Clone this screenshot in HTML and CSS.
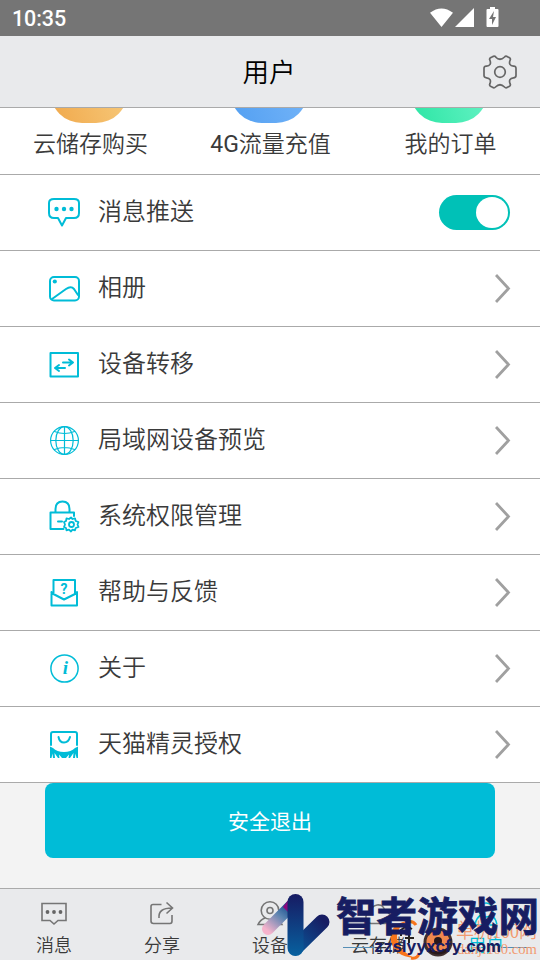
FILE: index.html
```html
<!DOCTYPE html>
<html lang="zh-CN">
<head>
<meta charset="utf-8">
<title>用户</title>
<link rel="stylesheet" href="styles.css">
</head>
<body>
<div class="screen">
  <div class="status">
    <span class="clock">10:35</span>
    <svg class="status-icons" width="70" height="24" viewBox="0 0 70 24" fill="#fff"><path d="M1 6.800Q12.500-1.800 24 6.800L12.500 21ZM26 21H45V2ZM58.500 3H61V1h5v2h2.500q1 0 1 1v16q0 1-1 1h-10q-1 0-1-1V4q0-1 1-1Z"/><path fill="#757575" d="M65 5l-5 8h3v6l4-8h-3Z"/></svg>
  </div>
  <header class="header">
    <h1>用户</h1>
    <svg class="gear" width="36" height="36" viewBox="-18 -18 36 36"><path d="M-4.500-15.500Q-6-16.300-7.500-15.300L-9.500-14.200Q-11-13.200-10-11.500Q-8.200-6.500-13.500-5.800Q-16-6-16-3.500V3.500Q-16 5.800-13.500 5.800Q-8.200 6.500-10 11.500Q-11 13.200-9.500 14.200L-7.500 15.300Q-5.800 16.500-4.500 15Q0 10.500 4.500 15Q5.800 16.500 7.500 15.300L9.500 14.200Q11 13.200 10 11.500Q8.200 6.500 13.500 5.800Q16 5.800 16 3.500V-3.500Q16-6 13.500-5.800Q8.200-6.500 10-11.500Q11-13.200 9.500-14.200L7.500-15.300Q5.800-16.500 4.500-15Q0-10.500-4.500-15Z"/><circle r="5.300"/></svg>
  </header>
  <section class="services">
    <div class="service"><i class="orb orange"></i><span>云储存购买</span></div>
    <div class="service"><i class="orb blue"></i><span><b>4G</b>流量充值</span></div>
    <div class="service"><i class="orb green"></i><span>我的订单</span></div>
  </section>
  <main class="list">
    <div class="row">
      <svg class="icon" viewBox="0 0 34 34"><path d="M7 4H27Q32 4 32 8V18Q32 23 27 23H19L15 30.500L11 23H7Q2 23 2 18V8Q2 4 7 4Z"/><g class="solid"><circle cx="9.500" cy="14" r="2.200"/><circle cx="17" cy="14" r="2.200"/><circle cx="24.500" cy="14" r="2.200"/></g></svg>
      <span>消息推送</span><b class="switch"></b>
    </div>
    <div class="row">
      <svg class="icon" viewBox="0 0 34 34"><rect x="3" y="6" width="29" height="23.500" rx="4"/><path d="M5 28L19 18Q24 14.500 27 18L31 24"/><circle class="solid" cx="7.800" cy="10.500" r="2.100"/></svg>
      <span>相册</span><svg class="arrow" viewBox="0 0 16 30"><path d="M1 1L13.500 14.500L1 28"/></svg>
    </div>
    <div class="row">
      <svg class="icon" viewBox="0 0 34 34"><rect x="3.500" y="6" width="27.500" height="23.500"/><path d="M16 15.500H26M22 12.500L26 15.500L22 18.500M18 21H8M12 18L8 21L12 24"/></svg>
      <span>设备转移</span><svg class="arrow" viewBox="0 0 16 30"><path d="M1 1L13.500 14.500L1 28"/></svg>
    </div>
    <div class="row">
      <svg class="icon thin" viewBox="0 0 34 34"><circle cx="17.500" cy="17.500" r="13.900"/><ellipse cx="17.500" cy="17.500" rx="8.700" ry="13.900"/><path d="M17.500 4V31M4 17.500H31M7.500 8.500Q17.500 12.500 27.500 8.500M7.500 26.500Q17.500 22.500 27.500 26.500"/></svg>
      <span>局域网设备预览</span><svg class="arrow" viewBox="0 0 16 30"><path d="M1 1L13.500 14.500L1 28"/></svg>
    </div>
    <div class="row">
      <svg class="icon" viewBox="0 0 34 34"><path d="M16.500 30H3.500V13.500H27V17M8.500 13V10Q8.500 2.500 15.500 2.500T22.500 10V13M11 22.500H15"/><path class="mini" d="M24 18.500L25.500 20L28 19.300L28.700 22L31.500 23L30.500 25.500L31.500 28L28.700 29L28 31.300L25.500 30.700L24 32.500L22 30.700L19.500 31.300L19 29L17 28L18 25.500L17 23L19 22L19.500 19.300L22 20Z"/><circle class="mini" cx="24.500" cy="25.500" r="2.500"/></svg>
      <span>系统权限管理</span><svg class="arrow" viewBox="0 0 16 30"><path d="M1 1L13.500 14.500L1 28"/></svg>
    </div>
    <div class="row">
      <svg class="icon" viewBox="0 0 34 34"><path d="M6.500 18V5H28V18M4.500 17V30.500H30V17M4.500 18L17 24.500L30 18"/><text x="17" y="19">?</text></svg>
      <span>帮助与反馈</span><svg class="arrow" viewBox="0 0 16 30"><path d="M1 1L13.500 14.500L1 28"/></svg>
    </div>
    <div class="row">
      <svg class="icon info" viewBox="0 0 34 34"><circle cx="17.500" cy="17.500" r="13.600"/><text x="18.500" y="23">i</text></svg>
      <span>关于</span><svg class="arrow" viewBox="0 0 16 30"><path d="M1 1L13.500 14.500L1 28"/></svg>
    </div>
    <div class="row">
      <svg class="icon" viewBox="0 0 34 34"><path d="M4 18V7Q4 5 6 5H28Q30 5 30 7V18M11.500 10Q12.500 15.500 17 15.500T23 10"/><path class="solid" d="M3 19.500L6 21Q10 25 17 25T28 21L31 19.500V31H29.500L28.500 26.500L28 31H26L26.500 26L23 31H21.500L22 27.500L19 31H15L12 27.500L12.500 31H11L7.500 26L8 31H6L5.500 26.500L4.500 31H3Z"/></svg>
      <span>天猫精灵授权</span><svg class="arrow" viewBox="0 0 16 30"><path d="M1 1L13.500 14.500L1 28"/></svg>
    </div>
  </main>
  <div class="exit"><button>安全退出</button></div>
  <nav class="tabs">
    <div class="tab"><svg viewBox="0 0 28 28"><path d="M2 4.500H26V21.500H18L14 25L10 21.500H2Z"/><g class="dot"><circle cx="7.500" cy="13" r="1.900"/><circle cx="14" cy="13" r="1.900"/><circle cx="20.500" cy="13" r="1.900"/></g></svg><span>消息</span></div>
    <div class="tab"><svg viewBox="0 0 28 28"><path d="M13.500 5.500H5Q3 5.500 3 7.500V22Q3 24.500 5.500 24.500H22Q24 24.500 24 22V16M11 19Q10 9 24 9M18.500 3.500L24.500 9L18.500 14.500"/></svg><span>分享</span></div>
    <div class="tab"><svg viewBox="0 0 28 28"><circle cx="14" cy="11.500" r="8.800"/><circle cx="14" cy="11.500" r="3"/><path d="M9 19Q4 21 2 25.500H26Q24 21 19 19"/></svg><span>设备</span></div>
    <div class="tab"><svg viewBox="0 0 28 28"><path d="M7 24.500H21Q27 23 26 16Q24 12 21 13Q20 5 13 6Q7 7 7 13Q1 14 2 20Q3 24 7 24.500"/></svg><span>云存储</span></div>
    <div class="tab active"><svg viewBox="0 0 28 28"><circle cx="14" cy="11" r="7"/><path d="M9 16Q4 19 3 26H25Q24 19 19 16"/></svg><span>用户</span></div>
  </nav>
  <svg class="mark" width="300" height="80" viewBox="240 880 300 80">
    <defs>
      <linearGradient id="navy" x1="0" y1="0" x2="0" y2="1"><stop offset="0" stop-color="#171b63"/><stop offset="1" stop-color="#07619f"/></linearGradient>
      <linearGradient id="rise" gradientUnits="userSpaceOnUse" x1="323" y1="920" x2="294" y2="950"><stop offset="0" stop-color="#171c62"/><stop offset="1" stop-color="#09589a"/></linearGradient>
      <linearGradient id="fade" gradientUnits="userSpaceOnUse" x1="268" y1="931" x2="291" y2="903"><stop offset="0" stop-color="#f5b3cc"/><stop offset=".55" stop-color="#5983b0"/><stop offset="1" stop-color="#063b83"/></linearGradient>
    </defs>
    <g class="stroke">
      <path stroke="url(#fade)" stroke-width="12" d="M268 929L291 906"/>
      <path fill="#8b087e" d="M283 907L289 899V913Z"/>
      <path stroke="url(#rise)" stroke-width="15" d="M295.500 948L322 922"/>
      <rect x="287.500" y="894" width="16" height="62" rx="8" fill="url(#navy)"/>
    </g>
    <path d="M343 947.500H375M501 947.500H531" stroke="#568eb5" stroke-width="1"/>
    <path d="M407 921Q389 924 391 941Q394 956 414 958Q402 952 398 942Q394 930 407 921Z" fill="#f8751b"/>
    <path d="M406 922Q413 920 416 925M411 958Q418 959 419 953" fill="none" stroke="#f8751b" stroke-width="3"/>
    <path d="M401 936V930Q406 925 412 929M405 938H414M409 933V943" fill="none" stroke="#28231f" stroke-width="2"/>
    <circle cx="438" cy="942" r="13" fill="#f0884d" stroke="#40302e" stroke-width="3"/>
    <circle cx="438" cy="941" r="4" fill="#28191c"/><path d="M428 949Q438 957 448 949" stroke="#28191c" stroke-width="3" fill="none"/>
    <g class="orange-copy"><text x="456" y="938" font-size="20" textLength="81" lengthAdjust="spacingAndGlyphs">单机100网</text><text x="457" y="954" font-size="15" textLength="80" lengthAdjust="spacingAndGlyphs">danji100.com</text></g>
    <text class="brand" x="336" y="931" textLength="203" lengthAdjust="spacingAndGlyphs">智者游戏网</text>
    <text class="domain" x="374" y="952" textLength="127" lengthAdjust="spacingAndGlyphs">zzslyyxcfy.com</text>
  </svg>
</div>
</body>
</html>
```
FILE: styles.css
```css
* { box-sizing: border-box; }
body { margin: 0; font-family: Roboto, "Noto Sans CJK SC", sans-serif; font-weight: 350; color: #3a3a3a; }
.screen { position: relative; width: 540px; height: 960px; overflow: hidden; display: flex; flex-direction: column; background: #f3f3f3; }
.status { height: 36px; flex: none; display: flex; align-items: center; justify-content: space-between; padding: 2px 42px 0 12px; background: #757575; color: #fff; }
.clock { font-size: 21.500px; font-weight: 500; letter-spacing: -.1px; margin-top: -2px; }
.status-icons { display: block; margin-top: -2px; margin-right: -1px; }
.header { height: 72px; flex: none; display: grid; grid-template-columns: 1fr 100px 1fr; align-items: center; background: #e9eaec; border-bottom: 1px solid #aaa; }
.header h1 { grid-column: 2; margin: 0 2px 0 0; text-align: center; font-size: 26.500px; line-height: 36px; padding-top: 3px; font-weight: 350; color: #000; }
.gear { justify-self: end; margin-right: 22px; fill: none; stroke: #666; stroke-width: 1.7; }
.services { height: 67px; flex: none; display: grid; grid-template-columns: repeat(3, 1fr); background: #fff; border-bottom: 1px solid #aaa; overflow: hidden; }
.service { display: flex; flex-direction: column; align-items: center; font-size: 23px; line-height: 32px; }
.service b { font-weight: 400; }
.service span { margin-left: 1px; }
.orb { flex: none; width: 78px; height: 76px; margin-top: -61px; margin-bottom: 6px; border-radius: 32px; }
.service .orb { margin-left: -2px; }
.orange { background: linear-gradient(70deg, #f0a84b, #f8cf83); }
.blue { background: linear-gradient(70deg, #529ff1, #7ab8fa); }
.green { background: linear-gradient(70deg, #2be5a4, #70f5ca); }
.list { flex: none; background: #fff; }
.row { height: 76px; display: flex; align-items: center; padding: 0 30px 0 47px; border-bottom: 1px solid #aaa; }
.row > span { flex: 1; margin-left: 17px; font-size: 24px; line-height: 34px; padding-bottom: 2px; }
.icon { width: 34px; height: 34px; flex: none; margin-top: -2px; fill: none; stroke: #00bcd7; stroke-width: 2; stroke-linejoin: round; stroke-linecap: round; }
.icon .solid { fill: #00bcd7; stroke: none; }
.icon.thin { stroke-width: 1.2; }
.icon .mini { stroke-width: 1.8; }
.icon text { fill: #00bcd7; stroke: none; font: bold 14px Roboto, sans-serif; text-anchor: middle; }
.icon.info { stroke-width: 1.5; }
.icon.info text { font: italic bold 19px "Liberation Serif", serif; }
.switch { width: 71px; height: 35px; display: flex; justify-content: flex-end; padding: 2px; border-radius: 18px; background: #00c1b7; }
.switch::after { content: ""; width: 32px; height: 31px; border-radius: 50%; background: #fff; }
.arrow { width: 16px; height: 30px; margin-right: -1px; fill: none; stroke: #a0a0a0; stroke-width: 2.8; }
.exit { height: 105px; flex: none; padding: 0 45px; }
.exit button { display: block; width: 450px; height: 75px; border: 0; border-radius: 8px; background: #00bcd7; color: #fff; font: 400 21px "Noto Sans CJK SC", sans-serif; padding: 0 0 1px; }
.tabs { height: 72px; flex: none; display: grid; grid-template-columns: repeat(5, 1fr); background: #e9eaec; border-top: 1px solid #aaa; }
.tab { display: flex; flex-direction: column; align-items: center; padding-top: 10px; font-size: 18px; line-height: 26px; }
.tab svg { width: 28px; height: 28px; margin-bottom: 6px; fill: none; stroke: #757575; stroke-width: 1.6; }
.tab .dot { fill: #666; stroke: none; }
.tab.active { color: #00bcd7; }
.tab.active svg { stroke: #00bcd7; }
.mark { position: absolute; left: 240px; top: 880px; }
.stroke { fill: none; stroke-linecap: round; }
.brand { font: 700 40px "Noto Sans CJK SC", sans-serif; fill: #171d62; stroke: #171d62; stroke-width: .8px; }
.domain { font: bold 16px Inter, sans-serif; fill: #171d62; }
.orange-copy { font-family: "Liberation Serif", "Noto Sans CJK SC", serif; fill: #f29a70; }
```
